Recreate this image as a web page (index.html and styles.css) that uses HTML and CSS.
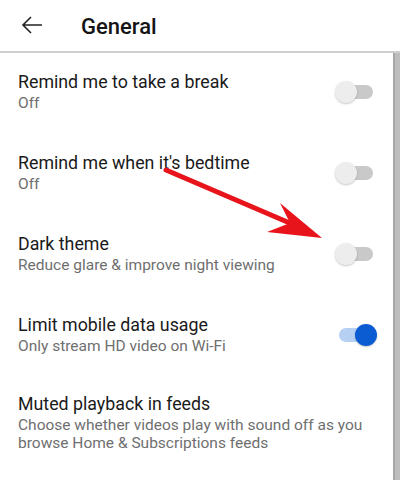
FILE: index.html
```html
<!DOCTYPE html>
<html>
<head>
<meta charset="utf-8">
<link rel="stylesheet" href="styles.css">
</head>
<body>
<div class="screen">
  <header class="topbar">
    <svg class="back" width="22" height="20" viewBox="0 0 22 20"><path d="M21 10H2M10 2L2 10L10 18" fill="none" stroke="#222" stroke-width="1.6"/></svg>
    <h1 class="title">General</h1>
  </header>
  <div class="body">
    <ul class="list">
      <li class="row">
        <div class="text"><div class="label">Remind me to take a break</div><div class="sub">Off</div></div>
        <span class="switch"></span>
      </li>
      <li class="row">
        <div class="text"><div class="label">Remind me when it's bedtime</div><div class="sub">Off</div></div>
        <span class="switch"></span>
      </li>
      <li class="row">
        <div class="text"><div class="label">Dark theme</div><div class="sub">Reduce glare &amp; improve night viewing</div></div>
        <span class="switch"></span>
      </li>
      <li class="row">
        <div class="text"><div class="label">Limit mobile data usage</div><div class="sub">Only stream HD video on Wi-Fi</div></div>
        <span class="switch on"></span>
      </li>
      <li class="row">
        <div class="text"><div class="label">Muted playback in feeds</div><div class="sub">Choose whether videos play with sound off as you browse Home &amp; Subscriptions feeds</div></div>
      </li>
    </ul>
    <div class="scrollbar"></div>
  </div>
  <svg class="pointer" width="400" height="480" viewBox="0 0 400 480">
    <line x1="166" y1="170" x2="292" y2="224" stroke="#e8141b" stroke-width="5" stroke-linecap="round"/>
    <polygon points="280,203 322,238 267,232 290,223" fill="#e8141b"/>
  </svg>
</div>
</body>
</html>
```
FILE: styles.css
```css
* { box-sizing: border-box; }
html, body { margin: 0; padding: 0; background: #fff; }
body { font-family: Roboto, "Noto Sans", sans-serif; }
.screen { position: relative; width: 400px; height: 480px; overflow: hidden; background: #fff; }
.topbar { height: 53px; display: flex; align-items: center; border-bottom: 2px solid #cfcfcf; padding-left: 21px; }
.back { display: block; margin-top: -2px; }
.title { margin: 1px 0 0 38px; font-size: 22px; font-weight: 500; color: #141414; }
.body { display: flex; height: 427px; }
.list { list-style: none; margin: 0; padding: 0; flex: 1; }
.row { height: 81px; display: flex; align-items: center; padding: 0 20px 0 18px; }
.row:last-child { align-items: flex-start; padding-top: 16px; }
.text { flex: 1; padding-bottom: 4px; }
.label { font-size: 17.8px; line-height: 22px; color: #1a1a1a; }
.sub { font-size: 15.5px; line-height: 17.5px; color: #6f6f6f; margin-top: 2px; }
.switch { position: relative; width: 34px; height: 14px; border-radius: 7px; background: #c9c9c9; margin-top: -4px; }
.switch::after { content: ""; position: absolute; left: -4px; top: -4px; width: 22px; height: 22px; border-radius: 50%; background: #ededed; box-shadow: 0 1px 2px rgba(0,0,0,0.22); }
.switch.on { background: #b6d0f3; }
.switch.on::after { left: 16px; background: #0b5bd3; }
.scrollbar { width: 7px; background: #bdbdbd; border-left: 2px solid #a6a6a6; }
.pointer { position: absolute; left: 0; top: 0; pointer-events: none; }
```
